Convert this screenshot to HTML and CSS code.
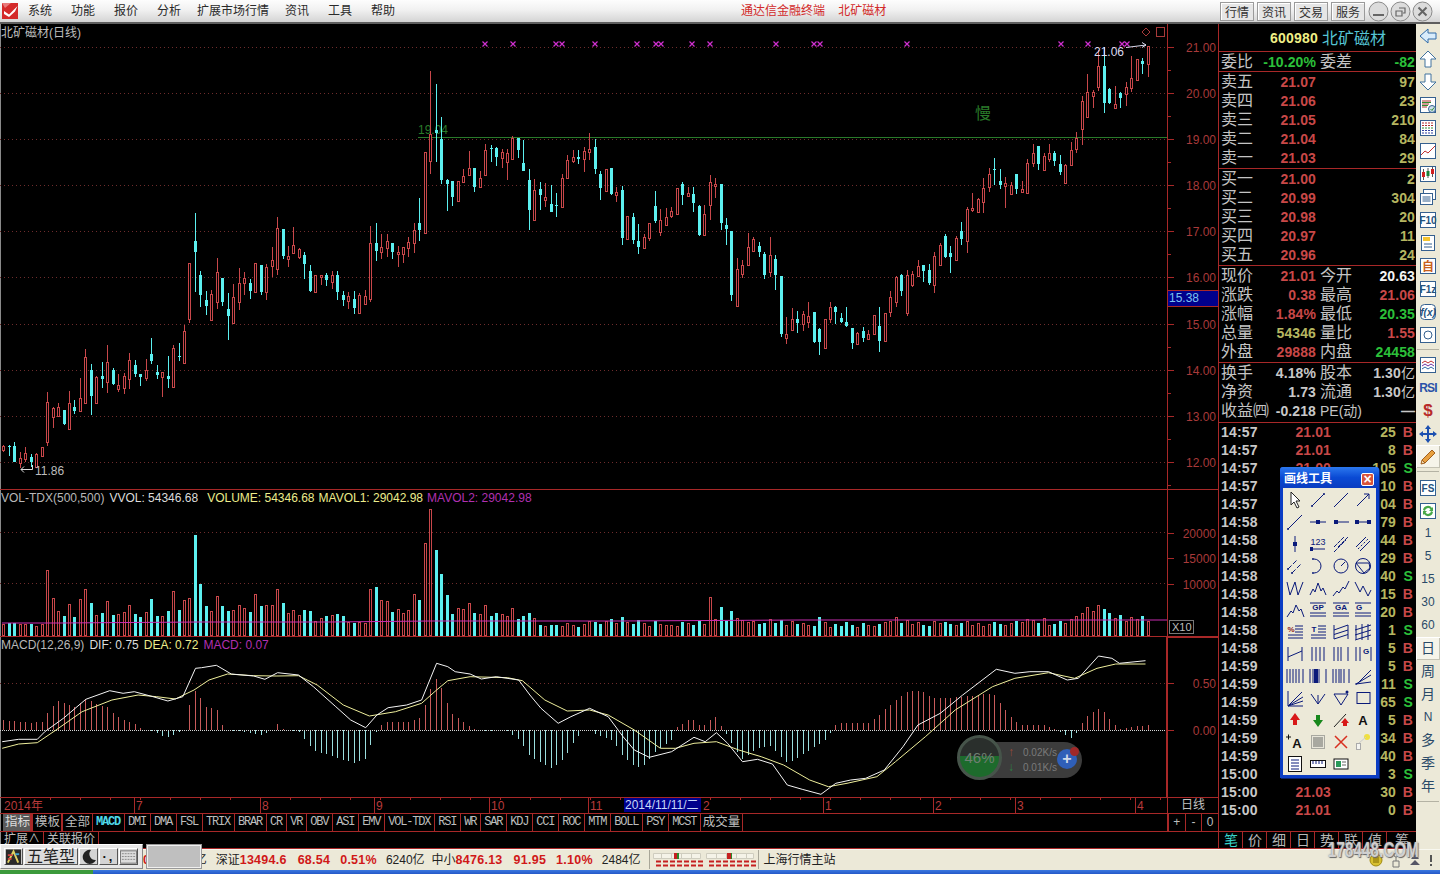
FILE: index.html
```html
<!DOCTYPE html>
<html lang="zh-CN">
<head>
<meta charset="utf-8">
<title>通达信金融终端 北矿磁材</title>
<link rel="stylesheet" href="styles.css">
</head>
<body>
<div class="app">
  <header class="menubar">
    <svg class="logo" viewBox="0 0 16 16"><rect width="16" height="16" fill="#d42a2a"/><path d="M0 0h9L3 5z" fill="#e87a7a"/><path d="M2 8L7 11.500 15.500 3 13 8.500 7 14 2 11z" fill="#fff"/></svg>
    <nav class="menu"><span>系统</span><span>功能</span><span>报价</span><span>分析</span><span>扩展市场行情</span><span>资讯</span><span>工具</span><span>帮助</span></nav>
    <div class="apptitle">通达信金融终端&nbsp;&nbsp;&nbsp;&nbsp;北矿磁材</div>
    <div class="menubtns"><button>行情</button><button>资讯</button><button>交易</button><button>服务</button></div>
    <div class="winctl">
      <svg viewBox="0 0 21 21"><circle cx="10.5" cy="10.5" r="9.5"/><path d="M5 14h11" class="g"/></svg>
      <svg viewBox="0 0 21 21"><circle cx="10.5" cy="10.5" r="9.5"/><path d="M9 7h6v5h-2M6 10h6v5H6z" class="g1"/></svg>
      <svg viewBox="0 0 21 21"><circle cx="10.5" cy="10.5" r="9.5"/><path d="M6.500 6.500l8 8M14.500 6.500l-8 8" class="g"/></svg>
    </div>
  </header>

  <main class="workspace">
    <section class="charts">
      <div class="pane pane-k">
        <svg id="kline" class="plot" width="1218" height="465" viewBox="0 24 1218 465"></svg>
        <div class="pane-title title-k">北矿磁材(日线)</div>
      </div>
      <div class="pane pane-v">
        <svg id="vol" class="plot" width="1218" height="146" viewBox="0 490 1218 146"></svg>
        <div class="pane-title"><span class="t-g gap5">VOL-TDX(500,500)</span><span class="t-w gap10">VVOL: 54346.68</span><span class="t-y gap4">VOLUME: 54346.68</span><span class="t-y gap4">MAVOL1: 29042.98</span><span class="t-m">MAVOL2: 29042.98</span></div>
      </div>
      <div class="pane pane-m">
        <svg id="macd" class="plot" width="1218" height="160" viewBox="0 637 1218 160"></svg>
        <div class="pane-title"><span class="t-g gap5">MACD(12,26,9)</span><span class="t-w gap5">DIF: 0.75</span><span class="t-y gap5">DEA: 0.72</span><span class="t-m">MACD: 0.07</span></div>
      </div>
      <div class="row-dates">
        <svg id="dates" width="1167" height="15" viewBox="0 798 1167 15"></svg>
        <div class="period">日线</div>
      </div>
      <div class="row-tabs">
        <div class="tabs">
          <span class="tab cn sel">指标</span><span class="tab cn box">模板</span><span class="tab cn">全部</span><span class="tab on">MACD</span><span class="tab">DMI</span><span class="tab">DMA</span><span class="tab">FSL</span><span class="tab">TRIX</span><span class="tab">BRAR</span><span class="tab">CR</span><span class="tab">VR</span><span class="tab">OBV</span><span class="tab">ASI</span><span class="tab">EMV</span><span class="tab">VOL-TDX</span><span class="tab">RSI</span><span class="tab">WR</span><span class="tab">SAR</span><span class="tab">KDJ</span><span class="tab">CCI</span><span class="tab">ROC</span><span class="tab">MTM</span><span class="tab">BOLL</span><span class="tab">PSY</span><span class="tab">MCST</span><span class="tab cn">成交量</span>
        </div>
        <div class="zoomers"><span>+</span><span>-</span><span>0</span></div>
      </div>
      <div class="row-ext"><span class="tab cn">扩展∧</span><span class="tab cn">关联报价</span></div>
    </section>

    <aside class="quote">
      <div class="q-head"><b>600980</b><span>北矿磁材</span></div>
      <div class="q-sec q-wei"><div class="qr"><i>委比</i><b class="g">-10.20%</b><i class="l2">委差</i><b class="g">-82</b></div></div>
      <div class="q-sec">
        <div class="qr"><i>卖五</i><b class="r">21.07</b><i></i><b class="y">97</b></div>
        <div class="qr"><i>卖四</i><b class="r">21.06</b><i></i><b class="y">23</b></div>
        <div class="qr"><i>卖三</i><b class="r">21.05</b><i></i><b class="y">210</b></div>
        <div class="qr"><i>卖二</i><b class="r">21.04</b><i></i><b class="y">84</b></div>
        <div class="qr"><i>卖一</i><b class="r">21.03</b><i></i><b class="y">29</b></div>
      </div>
      <div class="q-sec">
        <div class="qr"><i>买一</i><b class="r">21.00</b><i></i><b class="y">2</b></div>
        <div class="qr"><i>买二</i><b class="r">20.99</b><i></i><b class="y">304</b></div>
        <div class="qr"><i>买三</i><b class="r">20.98</b><i></i><b class="y">20</b></div>
        <div class="qr"><i>买四</i><b class="r">20.97</b><i></i><b class="y">11</b></div>
        <div class="qr"><i>买五</i><b class="r">20.96</b><i></i><b class="y">24</b></div>
      </div>
      <div class="q-sec">
        <div class="qr"><i>现价</i><b class="r">21.01</b><i class="l2">今开</i><b class="wh">20.63</b></div>
        <div class="qr"><i>涨跌</i><b class="r">0.38</b><i class="l2">最高</i><b class="r">21.06</b></div>
        <div class="qr"><i>涨幅</i><b class="r">1.84%</b><i class="l2">最低</i><b class="g">20.35</b></div>
        <div class="qr"><i>总量</i><b class="y">54346</b><i class="l2">量比</i><b class="r">1.55</b></div>
        <div class="qr"><i>外盘</i><b class="r">29888</b><i class="l2">内盘</i><b class="g">24458</b></div>
      </div>
      <div class="q-sec q-stats">
        <div class="qr"><i>换手</i><b class="w">4.18%</b><i class="l2">股本</i><b class="w">1.30<em>亿</em></b></div>
        <div class="qr"><i>净资</i><b class="w">1.73</b><i class="l2">流通</i><b class="w">1.30<em>亿</em></b></div>
        <div class="qr"><i class="wide">收益㈣</i><b class="w">-0.218</b><i class="l2 pe">PE(动)</i><b class="w">—</b></div>
      </div>
      <div class="ticks" id="ticks">
        <div class="tr"><b>14:57</b><b class="r">21.01</b><b class="y">25</b><b class="r">B</b></div>
        <div class="tr"><b>14:57</b><b class="r">21.01</b><b class="y">8</b><b class="r">B</b></div>
        <div class="tr"><b>14:57</b><b class="r">21.00</b><b class="y">105</b><b class="g">S</b></div>
        <div class="tr"><b>14:57</b><b></b><b class="y">10</b><b class="r">B</b></div>
        <div class="tr"><b>14:57</b><b></b><b class="y">04</b><b class="r">B</b></div>
        <div class="tr"><b>14:58</b><b></b><b class="y">79</b><b class="r">B</b></div>
        <div class="tr"><b>14:58</b><b></b><b class="y">44</b><b class="r">B</b></div>
        <div class="tr"><b>14:58</b><b></b><b class="y">29</b><b class="r">B</b></div>
        <div class="tr"><b>14:58</b><b></b><b class="y">40</b><b class="g">S</b></div>
        <div class="tr"><b>14:58</b><b></b><b class="y">15</b><b class="r">B</b></div>
        <div class="tr"><b>14:58</b><b></b><b class="y">20</b><b class="r">B</b></div>
        <div class="tr"><b>14:58</b><b></b><b class="y">1</b><b class="g">S</b></div>
        <div class="tr"><b>14:58</b><b></b><b class="y">5</b><b class="r">B</b></div>
        <div class="tr"><b>14:59</b><b></b><b class="y">5</b><b class="r">B</b></div>
        <div class="tr"><b>14:59</b><b></b><b class="y">11</b><b class="g">S</b></div>
        <div class="tr"><b>14:59</b><b></b><b class="y">65</b><b class="g">S</b></div>
        <div class="tr"><b>14:59</b><b></b><b class="y">5</b><b class="r">B</b></div>
        <div class="tr"><b>14:59</b><b></b><b class="y">34</b><b class="r">B</b></div>
        <div class="tr"><b>14:59</b><b></b><b class="y">40</b><b class="r">B</b></div>
        <div class="tr"><b>15:00</b><b></b><b class="y">3</b><b class="g">S</b></div>
        <div class="tr"><b>15:00</b><b class="r">21.03</b><b class="y">30</b><b class="r">B</b></div>
        <div class="tr"><b>15:00</b><b class="r">21.01</b><b class="y">0</b><b class="r">B</b></div>
      </div>
      <div class="q-tabs"><span class="on">笔</span><span>价</span><span>细</span><span>日</span><span>势</span><span>联</span><span>值</span><span class="last">筹</span></div>
    </aside>

    <nav class="tools">
      <div class="tool"><svg viewBox="0 0 20 20"><path d="M2 10l8-7v4h8v6h-8v4z" fill="#d8ecfb" stroke="#2f6aa8"/></svg></div>
      <div class="tool"><svg viewBox="0 0 20 20"><path d="M10 2l8 8h-5v8H7v-8H2z" fill="#fff" stroke="#41729e"/></svg></div>
      <div class="tool"><svg viewBox="0 0 20 20"><path d="M10 18l8-8h-5V2H7v8H2z" fill="#fff" stroke="#41729e"/></svg></div>
      <div class="tool"><svg viewBox="0 0 20 20"><rect x="2.500" y="2.500" width="15" height="15" fill="#fff" stroke="#35608f"/><path d="M4 6h9M4 9h7M4 12h5" stroke="#b03030"/><path d="M4 7.500h9M4 10.500h6" stroke="#2f8f2f"/><circle cx="14" cy="14" r="3.500" fill="#cfe0ee" stroke="#35608f"/><path d="M12.500 14l1.500 1.500 2-3" stroke="#2f8f2f" fill="none"/></svg></div>
      <div class="tool"><svg viewBox="0 0 20 20"><rect x="2.500" y="2.500" width="15" height="15" fill="#fff" stroke="#35608f"/><path d="M4 5h12M4 7.500h12" stroke="#b03030" stroke-dasharray="2 1"/><path d="M4 10h12" stroke="#2f8f2f" stroke-dasharray="2 1"/><path d="M4 12.500h12M4 15h12" stroke="#30409f" stroke-dasharray="2 1"/></svg></div>
      <div class="tool"><svg viewBox="0 0 20 20"><rect x="2.500" y="2.500" width="15" height="15" fill="#fff" stroke="#35608f"/><path d="M3 14l4-4 3 2 7-7" stroke="#c03030" fill="none"/></svg></div>
      <div class="tool"><svg viewBox="0 0 20 20"><rect x="2.500" y="2.500" width="15" height="15" fill="#fff" stroke="#35608f"/><path d="M5.500 5v11M10 4v10M14.500 3v10" stroke="#555"/><rect x="4" y="8" width="3" height="5" fill="#d02020"/><rect x="8.500" y="7" width="3" height="5" fill="#18813a"/><rect x="13" y="5" width="3" height="5" fill="#d02020"/></svg></div>
      <div class="tool"><svg viewBox="0 0 20 20"><rect x="5.500" y="2.500" width="12" height="10" fill="#fff" stroke="#35608f"/><rect x="2.500" y="6.500" width="12" height="11" fill="#fff" stroke="#35608f"/><path d="M4.500 10h8M4.500 12h8M4.500 14h8" stroke="#35608f"/></svg></div>
      <div class="tool"><svg viewBox="0 0 20 20"><rect x="2.500" y="2.500" width="15" height="15" fill="#fff" stroke="#35608f"/><text x="10" y="14" class="tooltxt">F10</text></svg></div>
      <div class="tool"><svg viewBox="0 0 20 20"><rect x="3.500" y="2.500" width="13" height="15" fill="#fff" stroke="#35608f"/><rect x="5" y="4" width="7" height="4" fill="#f4c430"/><path d="M6 11h8M6 14h8" stroke="#35608f"/></svg></div>
      <div class="tool"><svg viewBox="0 0 20 20"><rect x="2.500" y="2.500" width="15" height="15" fill="#fff" stroke="#35608f"/><text x="10" y="15" class="toolcn">自</text></svg></div>
      <div class="tool"><svg viewBox="0 0 20 20"><rect x="2.500" y="2.500" width="15" height="15" fill="#fff" stroke="#35608f"/><text x="10" y="14" class="tooltxt">F1z</text></svg></div>
      <div class="tool"><svg viewBox="0 0 20 20"><rect x="2.500" y="2.500" width="15" height="15" rx="4" fill="#fff" stroke="#35608f"/><text x="10" y="14" class="tooltxt it">f(x)</text></svg></div>
      <div class="tool"><svg viewBox="0 0 20 20"><rect x="2.500" y="2.500" width="15" height="15" fill="#fff" stroke="#35608f"/><circle cx="10" cy="10" r="4" fill="none" stroke="#35608f"/></svg></div>
      <div class="tool-sep"></div>
      <div class="tool"><svg viewBox="0 0 20 20"><rect x="2.500" y="2.500" width="15" height="15" fill="#fff" stroke="#35608f"/><path d="M4 8l3-2 3 2 3-2 3 2" stroke="#c03030" fill="none"/><path d="M4 11l3-2 3 2 3-2 3 2" stroke="#7030a0" fill="none"/><path d="M4 14l3-2 3 2 3-2 3 2" stroke="#2f6aa8" fill="none"/></svg></div>
      <div class="tool"><span class="rsi">RSI</span></div>
      <div class="tool"><span class="dollar">$</span></div>
      <div class="tool"><svg viewBox="0 0 20 20"><path d="M10 1l3 4h-2v4h4V7l4 3-4 3v-2h-4v4h2l-3 4-3-4h2v-4H5v2l-4-3 4-3v2h4V5H7z" fill="#1c50b0"/></svg></div>
      <div class="tool raised"><svg viewBox="0 0 20 20"><path d="M4 13L14 3l3 3L7 16z" fill="#e8a040" stroke="#a06020"/><path d="M4 13l-1 4 4-1z" fill="#f5dcb0" stroke="#a06020"/></svg></div>
      <div class="tool-sep wide"></div>
      <div class="tool"><svg viewBox="0 0 20 20"><rect x="2.500" y="2.500" width="15" height="15" fill="#fff" stroke="#35608f"/><text x="10" y="14" class="tooltxt">FS</text></svg></div>
      <div class="tool"><svg viewBox="0 0 20 20"><rect x="2.500" y="2.500" width="15" height="15" fill="#fff" stroke="#35608f"/><path d="M5 9a5 5 0 0 1 9-2l1-1v4h-4l1.500-1.500A3 3 0 0 0 7 10z" fill="#48a848"/><path d="M15 11a5 5 0 0 1-9 2l-1 1v-4h4l-1.500 1.500A3 3 0 0 0 13 10z" fill="#48a848"/></svg></div>
      <div class="tool txt">1</div><div class="tool txt">5</div><div class="tool txt">15</div><div class="tool txt">30</div><div class="tool txt">60</div>
      <div class="tool txt cnt raised">日</div><div class="tool txt cnt">周</div><div class="tool txt cnt">月</div><div class="tool txt">N</div><div class="tool txt cnt">多</div><div class="tool txt cnt">季</div><div class="tool txt cnt">年</div>
      <div class="tool-sep"></div>
    </nav>
  </main>

  <footer class="status">
    <span class="st-a red">0</span><span class="st-b">亿</span>
    <span class="st-c">深证</span><b class="red">13494.6</b><b class="red m11">68.54</b><b class="red m10">0.51%</b><span class="m9">6240亿</span>
    <span class="m7">中小</span><b class="red">8476.13</b><b class="red m11">91.95</b><b class="red m10">1.10%</b><span class="m9">2484亿</span>
    <div class="meter">
      <svg width="104" height="16" viewBox="0 0 104 16"><path d="M0.500 1.500h47v5h-47zM8.500 1.500v5M18.500 1.500v5M28.500 1.500v5M38.500 1.500v5M53.500 1.500h47v5h-47zM63.500 1.500v5M73.500 1.500v5M83.500 1.500v5M93.500 1.500v5" fill="#f5f3e8" stroke="#cfcdbf"/><rect x="21" y="1" width="3" height="6" fill="#c62020"/><rect x="24" y="1" width="2" height="6" fill="#2a8a2a"/><rect x="74" y="1" width="4" height="6" fill="#c62020"/><rect x="78" y="1" width="1" height="6" fill="#2a8a2a"/><path d="M3 9.500h47M3 13.500h47M56 9.500h47M56 13.500h47" stroke="#c62020" stroke-width="2" stroke-dasharray="5 2"/></svg>
    </div>
    <span class="station">上海行情主站</span>
    <div class="tray">
      <svg width="14" height="14" viewBox="0 0 14 14"><circle cx="7" cy="7" r="6" fill="#d8c030" stroke="#a08a10"/><path d="M4 5h6M4 7h6M4 9h6" stroke="#806a00"/></svg>
      <svg width="12" height="16" viewBox="0 0 12 16"><circle cx="6" cy="3" r="2" fill="none" stroke="#777"/><path d="M3 15V9h6v6zM6 5v4" fill="none" stroke="#777"/></svg>
      <svg width="12" height="14" viewBox="0 0 12 14"><path d="M6 1L2 6h8zM6 7l-5 5h10z" fill="#556"/></svg>
      <svg width="6" height="14" viewBox="0 0 6 14"><path d="M3 2v7M3 11v2" stroke="#555" stroke-width="2"/></svg>
    </div>
  </footer>
  <div class="taskbar"><div class="start"></div></div>

  <!-- floating items -->
  <div class="ime">
    <div class="ime-btn"><svg width="18" height="18" viewBox="0 0 18 18"><rect x="1" y="1" width="16" height="16" fill="#2a2a2a"/><path d="M3 15L9 3l5 12" fill="none" stroke="#e0d060" stroke-width="2"/><path d="M3 7h5M3 11h4" stroke="#d04040" stroke-width="2"/><path d="M11 6h4" stroke="#40a0d0" stroke-width="2"/></svg></div>
    <div class="ime-btn ime-name">五笔型</div>
    <div class="ime-btn"><svg width="16" height="16" viewBox="0 0 16 16"><path d="M10 1a7 7 0 1 0 5 10A6 6 0 0 1 10 1z" fill="#222"/></svg></div>
    <div class="ime-btn ime-dots">·,</div>
    <div class="ime-btn"><svg width="18" height="14" viewBox="0 0 18 14"><rect x=".5" y=".5" width="17" height="13" fill="#dcdcdc" stroke="#777"/><path d="M2 3.500h14M2 6.500h14M2 9.500h14" stroke="#888" stroke-dasharray="2 1"/></svg></div>
  </div>
  <div class="ime-box"></div>

  <div class="draw-tools">
    <div class="dt-title"><span>画线工具</span><div class="dt-close">×</div></div>
    <div class="dt-grid">
      <svg viewBox="0 0 20 20"><path d="M6 2v13l3-3 3 6 2-1-3-6h4z" fill="#fff" stroke="#222"/></svg>
      <svg viewBox="0 0 20 20"><path d="M4 16L16 4"/><circle cx="4" cy="16" r="1" class="f"/><circle cx="16" cy="4" r="1" class="f"/></svg>
      <svg viewBox="0 0 20 20"><path d="M3 17L17 3"/></svg>
      <svg viewBox="0 0 20 20"><path d="M4 16L16 4M11 4h5v5"/></svg>
      <svg viewBox="0 0 20 20"><path d="M3 17L17 3"/><circle cx="3" cy="17" r="1" class="f"/></svg>
      <svg viewBox="0 0 20 20"><path d="M2 10h16"/><rect x="8" y="8" width="4" height="4" class="f"/></svg>
      <svg viewBox="0 0 20 20"><path d="M5 10h13"/><rect x="3" y="8" width="4" height="4" class="f"/></svg>
      <svg viewBox="0 0 20 20"><path d="M3 10h14"/><rect x="2" y="8" width="4" height="4" class="f"/><rect x="14" y="8" width="4" height="4" class="f"/></svg>
      <svg viewBox="0 0 20 20"><path d="M10 2v16"/><rect x="8" y="8" width="4" height="4" class="f"/></svg>
      <svg viewBox="0 0 20 20"><text x="10" y="11" class="dt-t sm">123</text><path d="M3 15h14"/><rect x="2" y="13" width="3" height="4" class="f"/></svg>
      <svg viewBox="0 0 20 20"><path d="M3 13L13 3M7 13L17 3M3 18L15 6" stroke-dasharray="4 1"/></svg>
      <svg viewBox="0 0 20 20"><path d="M3 13L13 3M7 17L17 7"/><path d="M5 15l10-10" stroke-dasharray="2 2"/></svg>
      <svg viewBox="0 0 20 20"><path d="M3 13L12 4M7 17L16 8" stroke-dasharray="5 2"/><circle cx="3" cy="13" r="1" class="f"/><circle cx="7" cy="17" r="1" class="f"/></svg>
      <svg viewBox="0 0 20 20"><path d="M6 3a7 7 0 1 1 0 14" /><circle cx="5" cy="3" r="1" class="f"/><circle cx="5" cy="17" r="1" class="f"/></svg>
      <svg viewBox="0 0 20 20"><circle cx="10" cy="10" r="7"/><path d="M10 10l4-4"/></svg>
      <svg viewBox="0 0 20 20"><circle cx="10" cy="10" r="7.500"/><path d="M3 7l13 0 1 5-6 5z"/></svg>
      <svg viewBox="0 0 20 20"><path d="M2 4l3 13 5-13 3 13 5-13"/></svg>
      <svg viewBox="0 0 20 20"><path d="M2 17l3-6 2 3 3-9 3 8 2-3 3 7"/></svg>
      <svg viewBox="0 0 20 20"><path d="M2 18l4-5 2 2 4-6 2 2 4-8" /></svg>
      <svg viewBox="0 0 20 20"><path d="M2 4l5 10 3-6 5 10 3-6"/></svg>
      <svg viewBox="0 0 20 20"><path d="M2 17l4-6 2 2 3-8 3 6 2-2 3 8"/></svg>
      <svg viewBox="0 0 20 20"><text x="10" y="10" class="dt-t">GP</text><path d="M2 3h16M2 13h16M2 16h16"/></svg>
      <svg viewBox="0 0 20 20"><text x="10" y="10" class="dt-t">GA</text><path d="M2 3h16M2 13h16M2 16h16"/></svg>
      <svg viewBox="0 0 20 20"><text x="6" y="10" class="dt-t">G</text><path d="M2 3h16M2 13h16M2 16h16"/></svg>
      <svg viewBox="0 0 20 20"><text x="6" y="10" class="dt-t red">%</text><path d="M10 4h8M10 7h8M10 10h8M3 13h15M3 16h15"/></svg>
      <svg viewBox="0 0 20 20"><text x="6" y="10" class="dt-t">T</text><path d="M10 4h8M10 7h8M10 10h8M3 13h15M3 16h15"/></svg>
      <svg viewBox="0 0 20 20"><path d="M3 3v14M17 3v14M3 8L17 3M3 12.500L17 8M3 17L17 12.500"/></svg>
      <svg viewBox="0 0 20 20"><path d="M3 3v14M9 2v16M15 2v16M2 8L18 3M2 13L18 8M2 18L18 13"/></svg>
      <svg viewBox="0 0 20 20"><path d="M3 3v14M17 3v14M3 13L17 7"/></svg>
      <svg viewBox="0 0 20 20"><path d="M4 3v14M8 3v14M12 3v14M16 3v14"/></svg>
      <svg viewBox="0 0 20 20"><path d="M3 3v14M7 3v14M10 3v14M17 3v14"/></svg>
      <svg viewBox="0 0 20 20"><text x="13" y="10" class="dt-t">G</text><path d="M3 3v14M7 3v14M18 3v14"/></svg>
      <svg viewBox="0 0 20 20"><path d="M2 3v14M5 3v14M8 3v14M11 3v14M14 3v14M18 3v14"/></svg>
      <svg viewBox="0 0 20 20"><path d="M2 3v14M5 3v14M11 3v14M18 3v14"/><path d="M7 3v14M9 3v14" stroke-width="2"/></svg>
      <svg viewBox="0 0 20 20"><path d="M2 3v14M5 3v14M8 3v14M10 3v14M13 3v14M18 3v14"/></svg>
      <svg viewBox="0 0 20 20"><path d="M2 18h2L18 4M3 18L18 9M3 18l15-2"/></svg>
      <svg viewBox="0 0 20 20"><path d="M3 3v15h15M3 18L17 4M3 18L18 9M3 18l15-5"/></svg>
      <svg viewBox="0 0 20 20"><path d="M3 6l7 10 7-10M10 16V7"/></svg>
      <svg viewBox="0 0 20 20"><path d="M3 6h14L10 17z"/><circle cx="16" cy="4" r="1.500" class="f"/></svg>
      <svg viewBox="0 0 20 20"><rect x="4" y="4.500" width="13" height="11"/></svg>
      <svg viewBox="0 0 20 20"><path d="M10 3l5 7h-3v5H8v-5H5z" fill="#d81818" stroke="none"/></svg>
      <svg viewBox="0 0 20 20"><path d="M10 17l5-7h-3V5H8v5H5z" fill="#18881c" stroke="none"/></svg>
      <svg viewBox="0 0 20 20"><path d="M3 17L15 4" stroke="#222"/><path d="M11 9l4 5h-2v3H9v-3H7z" fill="#d81818" stroke="none" transform="translate(3 -1)"/></svg>
      <svg viewBox="0 0 20 20"><text x="10" y="15" class="dt-a">A</text></svg>
      <svg viewBox="0 0 20 20"><path d="M1 5h5M3.500 2.500v5" stroke="#111"/><text x="12" y="16" class="dt-a">A</text></svg>
      <svg viewBox="0 0 20 20"><rect x="3.500" y="3.500" width="13" height="13" fill="#e8e6da" stroke="#a8a8a0"/><rect x="5" y="5" width="10" height="10" fill="#a8a8a0" stroke="none"/></svg>
      <svg viewBox="0 0 20 20"><path d="M4 4l12 12M16 4L4 16" stroke="#d83020" stroke-width="1.500"/></svg>
      <svg viewBox="0 0 20 20"><circle cx="14" cy="5" r="3" fill="#f0e040" stroke="none"/><rect x="3.500" y="11.500" width="4" height="6" fill="#f4f4f0" stroke="#aaa"/><path d="M6 11l7-6" stroke="#ccc"/></svg>
      <svg viewBox="0 0 20 20"><rect x="3.500" y="2.500" width="13" height="15" fill="#fff" stroke="#111"/><path d="M6 6h8M6 9h8M6 12h8M6 15h8" /></svg>
      <svg viewBox="0 0 20 20"><rect x="2.500" y="6.500" width="15" height="7" fill="#fff" stroke="#111"/><path d="M5 7v3M8 7v3M11 7v3M14 7v3"/></svg>
      <svg viewBox="0 0 20 20"><rect x="3" y="5" width="14" height="10" fill="#fff" stroke="#111"/><rect x="5" y="7" width="5" height="6" fill="#2a9a5a" stroke="none"/><path d="M11 8h4M11 11h4" stroke="#666"/></svg>
    </div>
  </div>

  <div class="netw">
    <div class="net-dial"><span>46%</span></div>
    <div class="net-rates">
      <div><em class="up">↑</em>0.02K/s</div>
      <div><em class="dn">↓</em>0.01K/s</div>
    </div>
    <div class="net-plus">+<i></i></div>
  </div>

  <div class="watermark">178448.COM</div>
</div>
<script src="chart.js"></script>
</body>
</html>
```
FILE: styles.css
```css
*{box-sizing:border-box}
html,body{margin:0;padding:0;background:#000}
body{width:1440px;height:874px;overflow:hidden;font:12px/1.2 "Liberation Sans","Noto Sans CJK SC",sans-serif}
.app{position:relative;width:1440px;height:874px;display:flex;flex-direction:column}

/* title / menu */
.menubar{height:24px;display:flex;align-items:center;background:linear-gradient(#fdfdfd,#f1f1f1 45%,#d4d4d4);border-bottom:2px solid #5e5e5e;color:#222;position:relative}
.logo{width:16px;height:16px;margin-left:2px;margin-bottom:1px;flex:none}
.menu{display:flex;margin-left:10px;gap:19px;font-size:12px;width:690px;color:#2a2a2a}
.menu span:nth-child(4){margin-right:-3px}
.menu span:nth-child(5){margin-right:-3px}
.apptitle{width:509px;padding-left:23px;color:#d22a2a;white-space:nowrap}
.menubtns{display:flex;gap:3px;margin-left:-7px}
.menubtns button{width:34px;height:19px;padding:0;font:12px "Liberation Sans","Noto Sans CJK SC",sans-serif;color:#333;background:#e6e6e6;border:1px solid #9a9a9a;box-shadow:inset 1px 1px #fff}
.winctl{display:flex;margin-left:3px;gap:1px}
.winctl svg{width:21px;height:21px}
.winctl circle{fill:#dcdcdc;stroke:#8a8a8a}
.winctl .g{stroke:#666;stroke-width:2;fill:none}
.winctl .g1{stroke:#666;stroke-width:1.2;fill:none}

/* body layout */
.workspace{display:flex;height:825px;background:#000}
.charts{width:1218px;flex:none;display:flex;flex-direction:column;box-shadow:inset 1px 0 #8a8a8a}
.pane{position:relative;border-bottom:1px solid #a82828}
.pane-k{height:466px}
.pane-v{height:147px}
.pane-m{height:161px}
.plot{display:block}
.pane-title{position:absolute;left:1px;top:1px;display:flex;white-space:nowrap;line-height:14px;font-size:12px}
.title-k{color:#bdbdbd;top:2px}
.pane-v .pane-title{top:1px}
.pane-m .pane-title{top:1px}
.t-g{color:#b8b8b8}.t-w{color:#dcdcdc}.t-y{color:#ecec8c}.t-m{color:#b030b0}
.gap4{margin-right:4px}.gap5{margin-right:5px}.gap10{margin-right:9px}

.row-dates{height:16px;display:flex;border-bottom:1px solid #a82828}
.row-dates svg{display:block}
.period{width:51px;border-left:1px solid #a82828;color:#c0c0c0;text-align:center;line-height:15px;padding-right:0}
.row-tabs{height:18px;display:flex;justify-content:space-between;border-bottom:1px solid #a82828}
.tabs{display:flex;padding-left:3px}
.tab{display:block;padding:0 3.500px;border-right:1px solid #a82828;color:#bdbdbd;line-height:17px;font-family:"Liberation Mono","Noto Sans CJK SC",monospace;font-size:12px;letter-spacing:-1.2px;white-space:nowrap}
.tab.cn{font-family:"Liberation Sans","Noto Sans CJK SC",sans-serif;letter-spacing:0;font-size:12.500px;padding:0 1.500px 0 2px}
.tab.sel{background:#5a5a5a;color:#ddd;width:28px}
.tab.box{border:0;border-right:2px solid #a82828;border-left:2px solid #a82828;width:32px}
.tab.on{color:#4fd8e8;font-weight:bold}
.zoomers{display:flex;width:51px;border-left:2px solid #a82828;margin-right:0}
.zoomers span{flex:1;text-align:center;color:#bdbdbd;line-height:17px;border-right:1px solid #a82828}
.zoomers span:last-child{border-right:0}
.row-ext{height:17px;display:flex;border-bottom:1px solid #a82828;padding-left:1px;overflow:hidden}
.row-ext .tab{line-height:15px;padding:0 3px 0 3px;font-size:12px}

/* quote */
.quote{width:198px;flex:none;display:flex;flex-direction:column;border-left:1px solid #a82828;border-bottom:1px solid #a82828;padding-left:2px;color:#c8c8c8}
.q-head{height:28px;margin-left:-2px;display:flex;align-items:center;justify-content:flex-end;gap:4px;padding-right:30px;border-bottom:1px solid #a82828;padding-top:2px}
.q-head b{color:#efef86;font-size:14px;letter-spacing:.2px}
.q-head span{color:#55c4d4;font-size:16px}
.q-sec{margin-left:-2px;padding-left:2px;padding-bottom:1px;border-bottom:1px solid #a82828}
.q-wei{padding-bottom:0}
.q-stats{padding-bottom:2px}
.qr{display:grid;grid-template-columns:36px 59px 40px 59px;height:19px;line-height:20px;white-space:nowrap}
.qr i{font-style:normal;font-size:16px;color:#c4c4c4}
.qr .l2{padding-left:4px}
.qr .wide{width:48px}
.qr .pe{font-size:14px;padding-left:4px}
.qr b{text-align:right;font-size:14px;letter-spacing:.1px}
.qr em{font-style:normal;font-size:14px;font-weight:normal}
.r{color:#c84848}.g{color:#2cc03a}.y{color:#b6b660}.w{color:#c8c8c8}.wh{color:#f4f4f4}
.ticks{flex:1}
.tr{display:grid;grid-template-columns:36px 74px 65px 17px;height:18px;line-height:18px}
.tr b{font-size:14px;text-align:right;letter-spacing:.1px}
.tr b:first-child{text-align:left;letter-spacing:.2px;color:#c8c8c8}
.q-tabs{display:flex;height:17px;margin-left:-2px;border-top:1px solid #a82828;font-size:14px;color:#b8b8b8}
.q-tabs span{width:24px;text-align:center;border-right:1px solid #a82828;line-height:16px;padding-left:1px}
.q-tabs .last{width:29px;border-right:0}
.q-tabs .on{color:#38d4c8}

/* right toolbar */
.tools{width:24px;flex:none;background:#ece9d8;display:flex;flex-direction:column;padding-top:0}
.tool{height:23px;display:flex;align-items:center;justify-content:center;color:#2a5278}
.tool svg{width:20px;height:20px}
.tool-sep{height:7px;flex:none;position:relative}
.tool-sep.wide{height:8px}
.tool-sep::after{content:"";position:absolute;left:1px;right:1px;top:3px;border-top:1px solid #b4b2a4}
.tooltxt{font:bold 10px "Liberation Sans",sans-serif;fill:#24527e;text-anchor:middle}
.it{font-style:italic}
.toolcn{font:bold 12px "Noto Sans CJK SC",sans-serif;fill:#c8601c;text-anchor:middle}
.raised{background:#f6f4ea;box-shadow:inset 1px 1px #fff,inset -1px -1px #c4c2b4}
.rsi{font:bold 12px "Liberation Sans",sans-serif;color:#2a52a8;letter-spacing:-.8px}
.dollar{font:bold 17px "Liberation Sans",sans-serif;color:#b82a2a}
.txt{font-size:12px;color:#2a4a68}
.cnt{font-size:14px}

/* status */
.status{height:21px;background:#ece9d8;display:flex;align-items:center;color:#222;position:relative;white-space:nowrap;box-shadow:inset 0 1px #f8f8f0;padding-top:2px}
.status b{letter-spacing:.25px;font-size:12.500px}
.red{color:#d01818}
.st-a{margin-left:143px;font-weight:bold}
.st-b{margin-left:45px}
.st-c{margin-left:9px}
.m11{margin-left:11px}.m10{margin-left:10px}.m9{margin-left:9px}.m7{margin-left:7px}
.meter{margin-left:9px;padding:0 1px 0 3px;border-left:1px solid #a8a698;border-right:1px solid #a8a698;height:19px;display:flex;align-items:center;margin-top:-2px}
.station{margin-left:4px;font-size:12px;color:#222}
.tray{position:absolute;right:6px;top:2px;display:flex;align-items:center;gap:7px;height:17px}
.taskbar{height:4px;background:linear-gradient(#3a78e0,#2458c8)}
.start{width:93px;height:4px;background:#3c9a3c}

/* IME */
.ime{position:absolute;left:0;top:844px;width:143px;height:25px;display:flex;align-items:stretch;gap:1px;background:#e8e8e8;padding:3px;border:1px solid #fff;border-right-color:#888;border-bottom-color:#888}
.ime-btn{display:flex;align-items:center;justify-content:center;width:19px;background:#d4d4d4;border:1px solid #555;border-top-color:#fff;border-left-color:#fff;flex:none}
.ime-name{width:54px;font-size:16px;color:#222;background:#dcdcdc}
.ime-dots{font-size:13px;font-weight:bold;color:#111;letter-spacing:2px}
.ime-box{position:absolute;left:146px;top:844px;width:56px;height:25px;background:#bfbfbf;border:2px solid #f0f0f0;outline:1px solid #999;outline-offset:-1px}

/* drawing tools window */
.draw-tools{position:absolute;left:1280px;top:467px;width:99px;height:311px;border:3px solid #0b3dc4;border-top:0;border-radius:3px 3px 0 0;background:#ece9d8;box-shadow:1px 1px 0 #05206e}
.dt-title{height:21px;margin:0 -3px;padding:4px 5px 0 4px;display:flex;align-items:center;justify-content:space-between;background:linear-gradient(#2c78ee,#0a4ad4 50%,#0a3cc0);border-radius:3px 3px 0 0;color:#fff;font-weight:bold;font-size:12px}
.dt-close{width:13px;height:13px;background:#d8533a;border:1px solid #fff;border-radius:2px;color:#fff;line-height:10px;text-align:center;font-size:14px;font-weight:bold}
.dt-grid{display:grid;grid-template-columns:repeat(4,22.700px);grid-auto-rows:22px;padding:1px 0 0 1px;justify-items:center;align-items:center}
.dt-grid svg{width:20px;height:20px;fill:none;stroke:#0a1a7a;stroke-width:1}
.dt-grid .f{fill:#0a1a7a;stroke:none}
.dt-t{font:bold 8px "Liberation Sans",sans-serif;fill:#0a1a7a;stroke:none;text-anchor:middle}
.dt-t.sm{font-weight:normal;font-size:9px}
.dt-t.red{fill:#8a2020}
.dt-a{font:bold 13px "Liberation Sans",sans-serif;fill:#111;stroke:none;text-anchor:middle}

/* net widget */
.netw{position:absolute;left:957px;top:735px;width:125px;height:45px;display:flex;align-items:center}
.netw::before{content:"";position:absolute;left:22px;right:0;top:7px;bottom:2px;background:#3c3c3c;border-radius:0 18px 18px 0}
.net-dial{position:relative;width:45px;height:45px;border-radius:50%;border:3px solid #46544a;background:linear-gradient(#2a2f2c 0 47%,#1d6b2c 47%);color:#6f7f72;font-size:15px;text-align:center;line-height:39px;flex:none}
.net-rates{position:relative;color:#7a7a7a;font-size:10px;line-height:15px;margin-left:6px;margin-top:4px}
.net-rates em{font-style:normal;display:inline-block;width:15px;font-weight:bold;font-size:12px}
.up{color:#9a4a3a}.dn{color:#2f8044}
.net-plus{position:absolute;left:100px;top:14px;width:20px;height:20px;border-radius:50%;background:#2f5fb8;color:#cfd8e8;text-align:center;line-height:19px;font-size:16px;font-weight:bold}
.net-plus i{position:absolute;right:-2px;top:-2px;width:9px;height:9px;border-radius:50%;background:#a02828}

.watermark{position:absolute;left:1328px;top:837px;font:bold 22px "Liberation Sans",sans-serif;color:rgba(225,225,225,.85);text-shadow:0 0 2px #777,1px 1px 1px #666;transform:scaleX(.68);transform-origin:0 0;white-space:nowrap;letter-spacing:.3px}

/* svg chart text */
.ax{font:12px "Liberation Sans",sans-serif;fill:#a83a3a}
.axm{font:12px "Liberation Sans",sans-serif;fill:#b83a3a}
.lbl{font:12px "Liberation Sans",sans-serif;fill:#bdbdbd}
.lg{font:12px "Liberation Sans",sans-serif;fill:#2a7a2a}
.slow{font:16px "Noto Sans CJK SC",sans-serif;fill:#2a7a2a}
.hi{font:12px "Liberation Sans",sans-serif;fill:#dcdcf0}
.cur{font:12px "Liberation Sans",sans-serif;fill:#7cc4f0}
.xten{font:11px "Liberation Sans",sans-serif;fill:#bdbdbd}
```
FILE: chart.js
```js
// Daily candles read as: colour, high, body top, body bottom, low (3x image units)
var RAW = [
 [200,"r735,738,750,755 c735,738,740,768 c727,738,786,786 r757,775,790,805 r740,760,778,785 c763,770,787,800 r760,762,800,805 r742,742,767,767 r577,606,725,738 r622,625,650,683 r610,622,648,652 c630,630,672,675 r572,610,686,686 c600,620,634,642 r535,595,632,635 r448,472,610,612 c492,510,587,645 r528,530,610,612 c487,528,536,565 r436,487,545,578 c505,510,553,555 r523,556,568,575 r520,528,564,582 r458,481,538,568 c481,495,522,530 c522,522,530,557 r478,510,534,542 c415,462,484,492 c495,516,524,537 r516,516,530,590 c468,528,537,565 r435,445,560,564 c430,467,470,482 r376,394,488,488 r190,190,358,368 c40,124,156,275 c213,225,285,320 c273,300,318,345 r270,282,360,360 r175,216,306,327 c234,234,306,318 c280,327,347,420 r252,291,368,368 r205,250,305,330 r216,234,250,285 c237,250,272,297 r190,190,276,278 c195,196,276,285 r192,202,277,300 r140,181,197,232 r50,85,208,225 c87,87,168,178 r138,168,177,200 r82,136,158,158 r145,148,172,178 c156,165,193,238 c195,213,273,275 r225,226,275,276 r224,226,232,255 c220,226,240,258 r212,226,245,267 c214,225,275,300 c272,285,300,318 r277,289,302,327 c273,296,323,342 r280,286,338,338 r270,289,311,311 r77,130,297,305 c68,130,153,182 r103,142,156,177 r103,124,143,170 c130,130,155,177 r137,157,163,200"],
 [50,"r590,591,612,640 r562,575,593,620 r520,541,578,610 c445,519,541,573 r306,306,548,553 r63,252,332,372 c102,240,248,335 c200,266,390,402 c388,390,402,482 c393,393,441,468 r393,393,452,452 r358,378,396,398 r303,354,374,375 c354,354,412,425 r362,384,410,410 r282,300,374,375 c285,293,296,336 c290,293,320,348 r296,306,323,353 r297,309,335,390 r259,264,327,327 c264,264,300,323 c270,339,362,362 c358,390,480,540 r388,420,509,509 c396,417,434,480 r400,441,450,470 c405,461,485,486 c430,465,467,500 r373,384,472,472 r316,330,384,384 r300,320,333,339 c300,322,327,342 r290,304,327,365 r250,296,305,330 c268,291,357,372 c362,372,413,450 r357,357,423,423 c354,354,433,434 r410,427,434,456 c408,420,564,585 r497,497,566,566 c490,501,570,582 c522,573,591,612 r553,561,593,593 r518,520,564,574 c423,468,514,520 r478,510,547,558 r475,502,526,527 r472,483,498,505 r414,414,493,493 c396,402,435,465 r410,430,439,441 c412,432,459,486 c466,467,554,557 r465,492,554,555 r376,396,464,510 r385,402,408,445 c402,402,518,540 c505,525,537,585 c543,543,735,752 r625,657,767,767 r630,645,672,683 r550,591,644,644 r560,566,604,604 c575,588,606,620 c606,612,675,688 r562,615,666,682 c615,628,675,720"],
 [30,"c738,738,913,920 r860,912,925,942 r835,867,899,900 c843,866,879,908 r843,852,882,903 r817,858,875,895 c845,845,937,938 c895,897,935,975 r866,866,953,953 r817,832,866,878 c828,830,845,882 c848,865,876,880 c832,877,888,890 c895,895,938,957 r905,908,941,941 c890,903,924,935 r900,912,927,930 r855,855,913,913 c832,888,933,965 r850,850,932,932 r782,801,846,860 r738,742,815,830 c732,735,783,798 r720,736,850,858 r722,733,765,770 r690,708,738,742 c704,705,723,755 c702,720,760,765 r665,678,765,790 r640,644,704,704 c613,618,680,684 c648,670,680,728 r618,624,689,689 c576,603,627,645 r530,537,632,668 r490,535,541,545 r503,506,545,545 r443,475,515,548 r415,432,470,485 c385,417,419,465 c417,453,465,477 r442,460,467,533 r455,465,491,491 c432,433,477,491 r453,477,485,487 r388,400,490,490 r342,370,398,410 c348,348,402,420 r370,378,420,420 r342,370,387,397 c364,368,393,408 c375,402,427,436 r403,404,458,460 r336,360,405,405 r306,323,358,368 r198,213,296,344 r132,186,260,262 r180,186,197,233 r60,108,172,182 c52,108,219,250 c175,177,219,222 r168,222,235,236 c185,190,204,233 r155,170,192,227 r78,144,174,187 r88,88,150,152 c85,92,103,132 r47,47,103,140"]
];
var VOLTOP = [432,428,428,432,432,432,438,432,270,354,393,408,373,411,357,327,369,405,399,363,405,402,396,375,402,411,396,357,408,408,393,333,390,360,354,165,312,378,393,348,378,393,390,375,384,396,342,378,375,375,327,369,399,390,405,390,393,423,414,408,405,402,408,425,428,425,428,327,321,360,363,396,387,399,390,342,360,189,87,210,282,345,402,384,387,369,399,402,375,408,399,402,408,384,417,408,399,414,435,438,435,435];
var VOLPX = [9,12,10,8,11,14,13,11,14,16,12,18,13,11,15,12,9,14,11,10,10,9,13,12,10,14,11,38,16,28,14,24,17,15,13,14,11,12,16,12,15,10,14,11,12,10,9,18,13,8,11,9,13,10,8,12,10,9,11,13,14,18,12,15,11,13,10,9,14,12,13,11,10,12,14,10,12,9,11,13,11,10,12,14,13,16,15,12,17,10,11,14,12,16,19,22,28,24,30,26,22,17,20,14,18,16,19,14];
var DIF = [[3,305],[25,298],[50,298],[60,275],[85,235],[115,178],[147,152],[165,160],[180,155],[205,170],[225,183],[245,170],[262,85],[270,83],[290,76],[310,102],[340,108],[355,118],[372,98],[400,105],[420,140],[450,200],[470,240],[490,263],[505,225],[520,203],[545,195],[565,180],[585,70],[600,80],[610,95],[630,102],[645,117],[665,110],[695,120],[710,165],[725,205],[748,250],[765,230],[790,205],[815,230],[835,290],[850,330],[870,352],[900,335],[930,292],[945,305],[960,278],[975,310],[995,365],[1015,358],[1035,372],[1055,435],[1075,448],[1100,463],[1120,430],[1140,420],[1160,415],[1185,390],[1210,320],[1230,255],[1260,220],[1290,165],[1335,88],[1360,100],[1380,95],[1405,95],[1430,120],[1445,115],[1472,48],[1490,55],[1500,70],[1535,62]];
var DEA = [[3,325],[25,312],[50,308],[75,270],[110,215],[150,180],[185,165],[210,170],[235,177],[260,150],[280,120],[305,102],[340,107],[370,108],[400,107],[425,135],[460,195],[495,228],[530,215],[565,190],[585,150],[600,122],[630,110],[680,113],[700,122],[730,180],[760,213],[790,210],[815,225],[850,270],[885,325],[905,325],[930,310],[960,305],[990,330],[1020,350],[1050,375],[1085,420],[1110,440],[1135,430],[1175,410],[1200,365],[1240,290],[1280,210],[1330,140],[1360,115],[1405,98],[1440,115],[1470,85],[1495,72],[1535,72]];
var HIST = [[3,30],[40,22],[58,25],[65,60],[78,88],[90,75],[100,70],[115,95],[130,75],[143,70],[155,45],[165,30],[180,20],[190,0],[205,-3],[222,-25],[240,-5],[248,0],[253,75],[262,120],[275,70],[290,65],[300,0],[320,-3],[352,-15],[365,0],[372,20],[380,2],[400,-5],[410,-35],[420,-60],[440,-75],[460,-90],[475,-100],[490,-85],[498,-30],[505,0],[515,25],[550,25],[565,40],[575,120],[585,155],[592,120],[605,50],[620,25],[630,10],[640,-3],[680,-3],[695,-30],[710,-80],[740,-115],[755,-85],[775,-15],[785,5],[800,-15],[820,-30],[835,-80],[850,-110],[860,-115],[875,-70],[900,-30],[905,5],[925,35],[940,10],[958,40],[968,5],[980,-40],[995,-90],[1010,-60],[1030,-45],[1055,-100],[1075,-75],[1105,-30],[1115,0],[1120,20],[1165,20],[1190,70],[1215,115],[1235,118],[1250,95],[1270,95],[1290,100],[1330,110],[1350,50],[1365,15],[1400,15],[1420,-5],[1435,-25],[1445,0],[1455,40],[1475,70],[1485,35],[1500,3],[1535,15]];

var RED="#c8474a", CY="#5cf0f0", AX="#a82828", GRID="#6e2c2c";
function cx(i){return Math.round(3.3+i*5.475);}
function L(x1,y1,x2,y2,c,extra){return '<line x1="'+x1+'" y1="'+y1+'" x2="'+x2+'" y2="'+y2+'" stroke="'+c+'"'+(extra||'')+'/>';}
function T(x,y,s,cls,extra){return '<text x="'+x+'" y="'+y+'" class="'+cls+'"'+(extra||'')+'>'+s+'</text>';}
function dotted(y,x1,x2){return L(x1||0,y+.5,x2||1167,y+.5,GRID,' stroke-dasharray="1 3"');}

// ---- K line ----
var k='', candles=[];
RAW.forEach(function(seg){
  seg[1].split(' ').forEach(function(s){
    var n=s.slice(1).split(',').map(function(v){return Math.round(seg[0]+v/3);});
    candles.push({c:s[0],h:n[0],t:n[1],b:n[2],l:n[3]});
  });
});
[47,93,139,185,231,277,324,370,416,462].forEach(function(y,i){
  k+=dotted(y);
  k+=L(1167,y+.5,1174,y+.5,AX);
  k+=L(1167,y+23.5,1171,y+23.5,AX);
  k+=T(1216,y+5,(21-i).toFixed(2),'ax',' text-anchor="end"');
});
k+=L(1167.5,24,1167.5,489,AX);
k+=L(418,137.5,1167,137.5,'#2a7a2a');
k+=T(418,134,'19.04','lg');
k+=T(975,119,'慢','slow');
candles.forEach(function(d,i){
  var x=cx(i),col=d.c==='r'?RED:CY;
  if(d.c==='r'){
    if(d.h<d.t)k+=L(x+.5,d.h,x+.5,d.t,col);
    if(d.l>d.b)k+=L(x+.5,d.b,x+.5,d.l,col);
    k+='<rect x="'+(x-.5)+'" y="'+(d.t+.5)+'" width="2" height="'+Math.max(1,d.b-d.t)+'" fill="#000" stroke="'+col+'"/>';
  }else{
    k+=L(x+.5,d.h,x+.5,d.l,col);
    k+='<rect x="'+(x-1)+'" y="'+d.t+'" width="3" height="'+Math.max(1,d.b-d.t)+'" fill="'+col+'"/>';
  }
});
[485,513,556,562,595,637,656,661,692,710,776,814,820,907,1061,1088,1122,1127].forEach(function(x){
  k+='<path d="M'+(x-2.5)+' 41.500l5 5M'+(x+2.5)+' 41.500l-5 5" stroke="#d030d0" stroke-width="1.200" fill="none"/>';
});
k+=T(1094,56,'21.06','hi');
k+='<path d="M1126 47.500L1146 45M1142 42.500l4 2.500-4 2.500" fill="none" stroke="#dcdcf0"/>';
k+='<path d="M32.500 465v4.500H21M24 466.500l-3 3 3 3" fill="none" stroke="#dcdcdc"/>';
k+=T(35,475,'11.86','lbl');
k+='<path d="M1146 28l4 4-4 4-4-4z" fill="none" stroke="#a83a3a"/>';
k+='<rect x="1156.500" y="27.500" width="8" height="9" fill="none" stroke="#a83a3a"/>';
k+='<rect x="1168" y="291" width="50" height="15" fill="#00008c"/>';
k+=L(1168,290.5,1218,290.5,AX)+L(1168,306.5,1218,306.5,AX);
k+=T(1169,302,'15.38','cur');
document.getElementById('kline').innerHTML=k;

// ---- Volume ----
var v='';
v+=dotted(532)+dotted(583);
[[533,'20000'],[558,'15000'],[584,'10000']].forEach(function(a){
  v+=L(1167,a[0]+.5,1174,a[0]+.5,AX);
  v+=T(1216,a[0]+5,a[1],'ax',' text-anchor="end"');
});
v+=L(1167.5,490,1167.5,636,AX);
candles.forEach(function(d,i){
  var x=cx(i),top=i<VOLTOP.length?Math.round(480+VOLTOP[i]/3):635-VOLPX[i-VOLTOP.length];
  if(d.c==='r')v+='<rect x="'+(x-.5)+'" y="'+(top+.5)+'" width="2" height="'+(635-top)+'" fill="#000" stroke="'+RED+'"/>';
  else v+='<rect x="'+(x-1)+'" y="'+top+'" width="3" height="'+(636-top)+'" fill="'+CY+'"/>';
});
v+='<polyline points="2,623 60,623 200,622 330,622 430,621 620,621 800,620 1167,620" fill="none" stroke="#c82cb0"/>';
v+='<rect x="1169.500" y="620.500" width="24" height="13" fill="#000" stroke="#777"/>';
v+=T(1172,631,'X10','xten');
document.getElementById('vol').innerHTML=v;

// ---- MACD ----
var m='';
function interp(tab,z){
  for(var j=1;j<tab.length;j++){
    if(z<=tab[j][0]){
      var a=tab[j-1],b=tab[j];
      return a[1]+(b[1]-a[1])*(z-a[0])/(b[0]-a[0]);
    }
  }
  return tab[tab.length-1][1];
}
m+=dotted(683);
for(var i=0;i<210;i++){
  var x=cx(i),h=interp(HIST,x*1.34)/3;
  if(Math.abs(h)<.4)continue;
  m+=L(x+.5,730,x+.5,Math.round(730-h),h>0?'#c85a5a':'#9adede');
}
m+=L(0,730.5,1167,730.5,'#d4d4d4',' stroke-dasharray="1 1"');
function line(tab,c){
  return '<polyline fill="none" stroke="'+c+'" points="'+tab.map(function(p){return (p[0]/1.34).toFixed(1)+','+(640+p[1]/3).toFixed(1);}).join(' ')+'"/>';
}
m+=line(DEA,'#efef9c')+line(DIF,'#f4f4f4');
m+='<path d="M1167 637h51M1167 637v160" fill="none" stroke="'+AX+'" stroke-width="2"/>';
m+=L(1167,683.5,1174,683.5,AX)+L(1167,730.5,1174,730.5,AX);
m+=T(1216,688,'0.50','ax',' text-anchor="end"')+T(1216,735,'0.00','ax',' text-anchor="end"');
document.getElementById('macd').innerHTML=m;

// ---- Date axis ----
var dt='';
for(var xx=20;xx<1167;xx+=30)dt+=L(xx+.5,798,xx+.5,800,AX);
[[3,'2014年',0],[134,'7',1],[260,'8',1],[374,'9',1],[489,'10',1],[588,'11',1],[702,'2',0],[823,'1',1],[933,'2',1],[1015,'3',1],[1135,'4',1]].forEach(function(a){
  if(a[2])dt+=L(a[0]+.5,798,a[0]+.5,813,AX);
  dt+=T(a[0]+(a[2]?2:1),810,a[1],'axm');
});
dt+='<rect x="624" y="798" width="77" height="14" fill="#00008c"/>';
dt+=T(625,809,'2014/11/11/二','lbl',' style="fill:#c8d8f8;font-family:\'Liberation Sans\',\'Noto Sans CJK SC\',sans-serif"');
document.getElementById('dates').innerHTML=dt;
```
